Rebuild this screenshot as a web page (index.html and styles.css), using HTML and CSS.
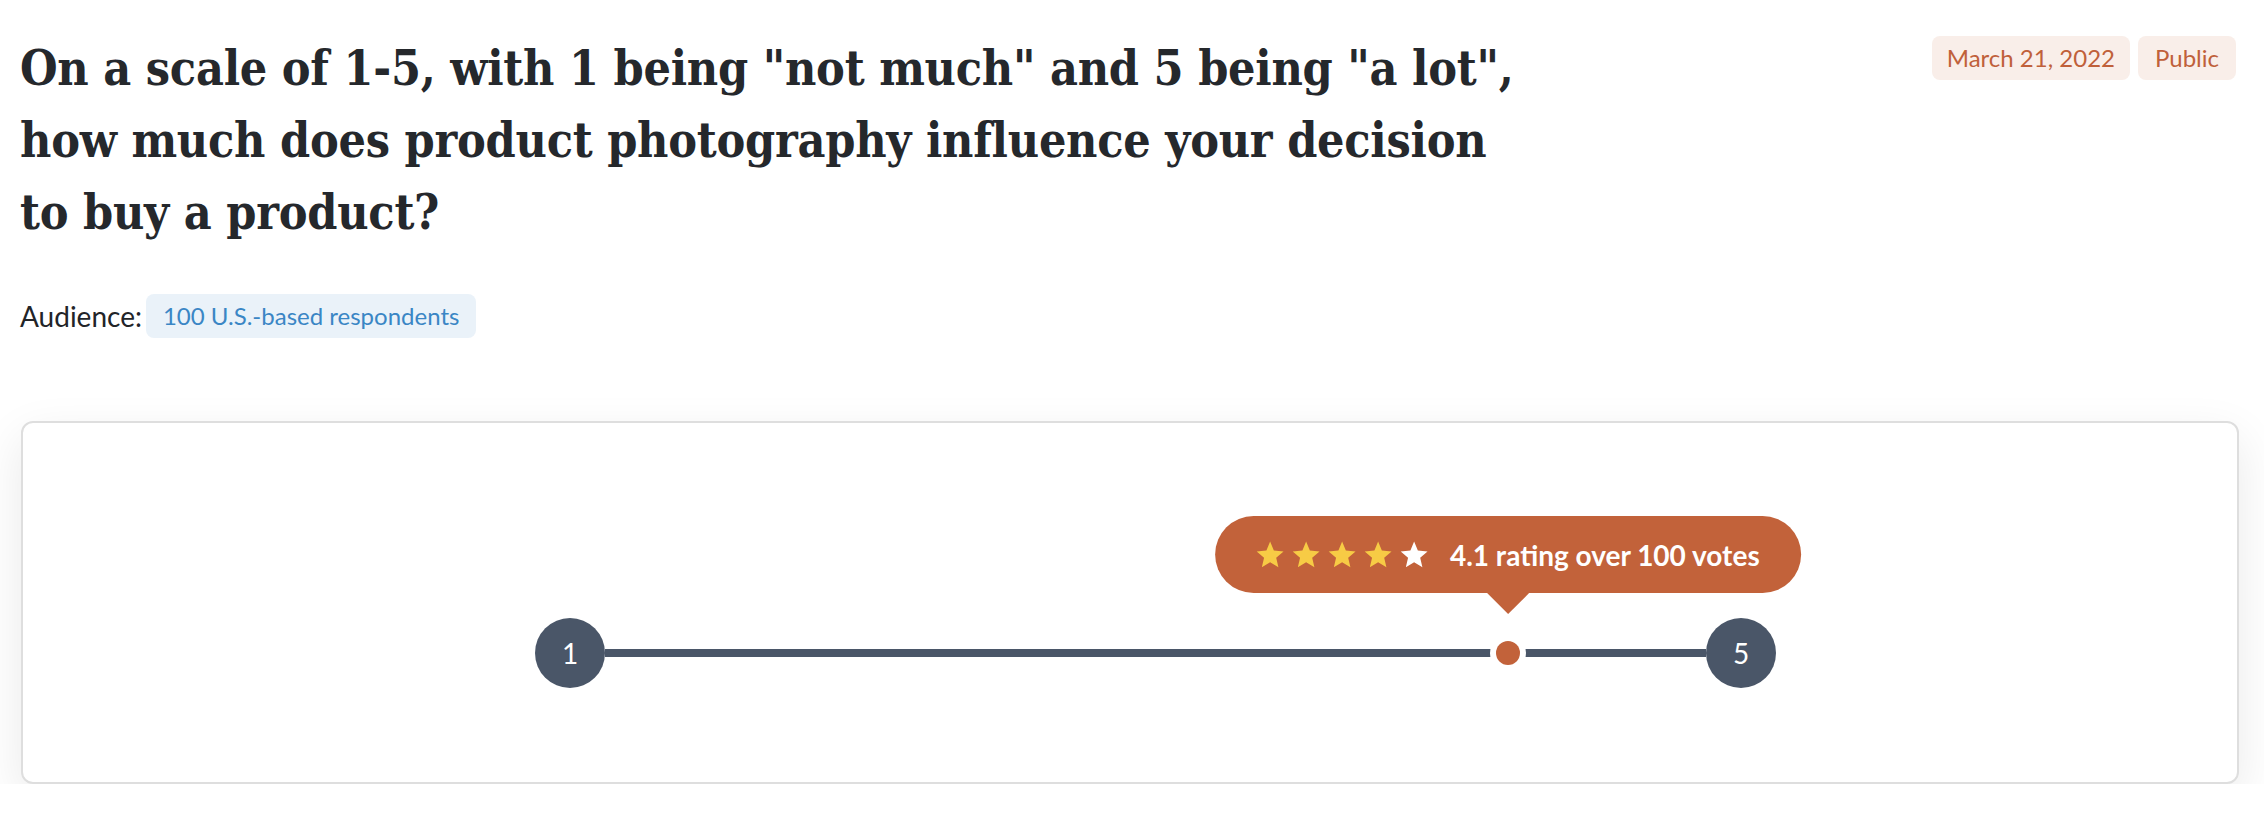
FILE: index.html
```html
<!DOCTYPE html>
<html lang="en">
<head>
<meta charset="utf-8">
<title>Poll result</title>
<link rel="stylesheet" href="styles.css">
</head>
<body>
<main class="page">
  <header class="question-head">
    <h1 class="question-title">On a scale of 1-5, with 1 being "not much" and 5 being "a lot",<br>how much does product photography influence your decision<br>to buy a product?</h1>
    <div class="meta">
      <span class="tag tag-warm">March 21, 2022</span>
      <span class="tag tag-warm">Public</span>
    </div>
  </header>

  <p class="audience">Audience: <span class="tag tag-cool">100 U.S.-based respondents</span></p>

  <section class="result-card">
    <div class="scale">
      <span class="scale-end">1</span>
      <div class="scale-track">
        <div class="scale-marker" style="left: 82%">
          <div class="rating-bubble">
            <span class="stars">
              <svg class="star star-on" viewBox="0 0 24 24"><polygon points="12,0.5 15.2,8.2 23.5,8.9 17.2,14.3 19.1,22.5 12,18.2 4.9,22.5 6.8,14.3 0.5,8.9 8.8,8.2"/></svg>
              <svg class="star star-on" viewBox="0 0 24 24"><polygon points="12,0.5 15.2,8.2 23.5,8.9 17.2,14.3 19.1,22.5 12,18.2 4.9,22.5 6.8,14.3 0.5,8.9 8.8,8.2"/></svg>
              <svg class="star star-on" viewBox="0 0 24 24"><polygon points="12,0.5 15.2,8.2 23.5,8.9 17.2,14.3 19.1,22.5 12,18.2 4.9,22.5 6.8,14.3 0.5,8.9 8.8,8.2"/></svg>
              <svg class="star star-on" viewBox="0 0 24 24"><polygon points="12,0.5 15.2,8.2 23.5,8.9 17.2,14.3 19.1,22.5 12,18.2 4.9,22.5 6.8,14.3 0.5,8.9 8.8,8.2"/></svg>
              <svg class="star star-off" viewBox="0 0 24 24"><polygon points="12,0.5 15.2,8.2 23.5,8.9 17.2,14.3 19.1,22.5 12,18.2 4.9,22.5 6.8,14.3 0.5,8.9 8.8,8.2"/></svg>
            </span>
            <span class="rating-text">4.1 rating over 100 votes</span>
          </div>
        </div>
      </div>
      <span class="scale-end">5</span>
    </div>
  </section>
</main>
</body>
</html>
```

FILE: styles.css
```css
* {
  box-sizing: border-box;
}

body {
  margin: 0;
  background: #ffffff;
  color: #222428;
  font-family: "Source Sans Pro", Lato, "Noto Sans", sans-serif;
}

.page {
  padding: 32px 28px 0 20px;
}

/* Question heading + meta tags */
.question-head {
  display: flex;
  justify-content: space-between;
  align-items: flex-start;
}

.question-title {
  margin: 0;
  font-family: "DejaVu Serif", "Liberation Serif", serif;
  font-stretch: semi-condensed;
  font-weight: 700;
  font-size: 48px;
  line-height: 72px;
  letter-spacing: -0.25px;
  color: #25282c;
}

.meta {
  display: flex;
  gap: 8px;
  margin-top: 4px;
  flex-shrink: 0;
}

.tag {
  display: inline-block;
  height: 44px;
  padding: 0 17px;
  border-radius: 8px;
  font-size: 24px;
  line-height: 44px;
  white-space: nowrap;
}

.tag-warm {
  background: #f9eee9;
  color: #c0603a;
}

.tag-warm:first-child {
  padding: 0 15px;
}

.tag-cool {
  background: #eaf2f9;
  color: #3a86c5;
}

/* Audience line */
.audience {
  display: flex;
  align-items: center;
  gap: 4px;
  margin: 46px 0 0;
  font-size: 28px;
  line-height: 44px;
}

/* Result card */
.result-card {
  margin: 83px -3px 0 1px;
  padding: 195px 461px 94px 512px;
  background: #ffffff;
  border: 2px solid #dedede;
  border-radius: 12px;
  box-shadow: 0 16px 48px rgba(0, 0, 0, 0.09);
}

.scale {
  display: flex;
  align-items: center;
}

.scale-end {
  flex: 0 0 70px;
  width: 70px;
  height: 70px;
  border-radius: 50%;
  background: #4a5668;
  color: #ffffff;
  font-size: 28px;
  line-height: 70px;
  text-align: center;
}

.scale-track {
  position: relative;
  flex: 1;
  height: 8px;
  background: #4a5668;
}

.scale-marker {
  position: absolute;
  top: 50%;
  width: 24px;
  height: 24px;
  margin: -12px 0 0 -12px;
  border-radius: 50%;
  background: #c2623a;
  box-shadow: 0 0 0 6px #ffffff;
}

/* Rating tooltip above the marker */
.rating-bubble {
  position: absolute;
  left: 50%;
  bottom: 72px;
  transform: translateX(-50%);
  display: flex;
  align-items: center;
  gap: 22px;
  height: 77px;
  padding: 0 41px;
  border-radius: 39px;
  background: #c2623a;
  color: #ffffff;
  white-space: nowrap;
}

.rating-bubble::after {
  content: "";
  position: absolute;
  left: 50%;
  top: 100%;
  margin-left: -21px;
  border-style: solid;
  border-width: 21px 21px 0 21px;
  border-color: #c2623a transparent transparent transparent;
}

.stars {
  display: flex;
  gap: 8px;
}

.star {
  display: block;
  width: 28px;
  height: 28px;
}

.star-on {
  fill: #f7cb45;
}

.star-off {
  fill: #ffffff;
}

.rating-text {
  font-size: 28px;
  font-weight: 700;
}
```
